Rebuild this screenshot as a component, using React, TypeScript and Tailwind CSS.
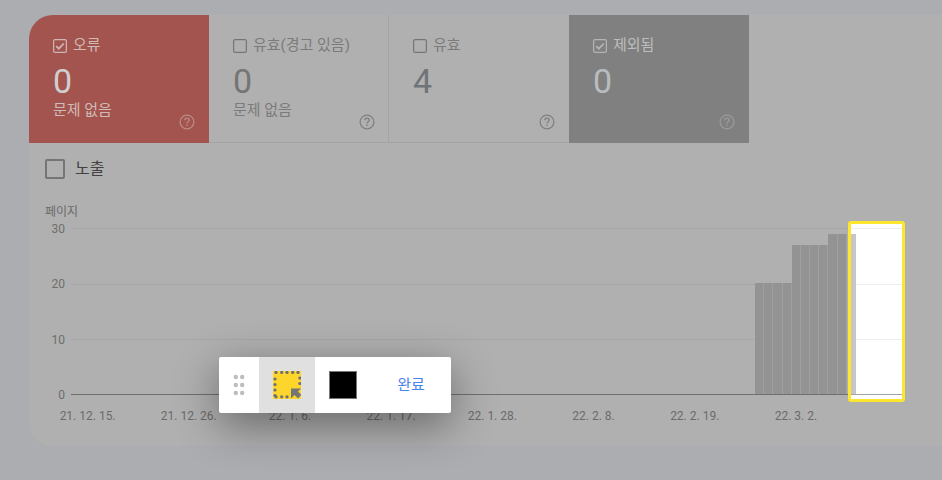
const FONT = "font-['Roboto','Noto_Sans_CJK_KR',sans-serif]";

type Tile = {
  label: string;
  value: string;
  note?: string;
  checked: boolean;
  bg: string;
  labelColor: string;
  boxColor: string;
  valueColor: string;
  helpColor: string;
};

const tiles: Tile[] = [
  { label: '오류', value: '0', note: '문제 없음', checked: true, bg: 'border-transparent bg-[#a3544e]', labelColor: 'text-[#d0bab7]', boxColor: '#cfb6b3', valueColor: 'text-[#cfcfcf]', helpColor: '#bb8a86' },
  { label: '유효(경고 있음)', value: '0', note: '문제 없음', checked: false, bg: 'border-[#a4a4a4]', labelColor: 'text-[#7b7b7b]', boxColor: '#757575', valueColor: 'text-[#757575]', helpColor: '#808080' },
  { label: '유효', value: '4', checked: false, bg: 'border-[#a4a4a4] border-r-transparent', labelColor: 'text-[#7b7b7b]', boxColor: '#757575', valueColor: 'text-[#6f7478]', helpColor: '#808080' },
  { label: '제외됨', value: '0', checked: true, bg: 'border-transparent bg-[#808080]', labelColor: 'text-[#bdbdbd]', boxColor: '#b4b4b4', valueColor: 'text-[#b8bcbf]', helpColor: '#9a9a9a' },
];

const xLabels = ['21. 12. 15.', '21. 12. 26.', '22. 1. 6.', '22. 1. 17.', '22. 1. 28.', '22. 2. 8.', '22. 2. 19.', '22. 3. 2.'];
const yLabels = ['30', '20', '10', '0'];
const bars = [20, 20, 20, 20, 27, 27, 27, 27, 29, 29];

function CheckBox({ checked, color }: { checked: boolean; color: string }) {
  return (
    <svg width="14" height="14" viewBox="0 0 14 14" className="shrink-0">
      <rect x="0.6" y="0.6" width="12.8" height="12.8" rx="1.6" fill="none" stroke={color} strokeWidth="1.2" />
      {checked && <path d="M3.2 7.2l2.6 2.5 5-5.2" fill="none" stroke={color} strokeWidth="1.8" />}
    </svg>
  );
}

function HelpIcon({ color }: { color: string }) {
  return (
    <svg width="16" height="16" viewBox="0 0 16 16" className="absolute bottom-[12px] right-[13px]">
      <circle cx="8" cy="8" r="6.9" fill="none" stroke={color} strokeWidth="1.3" />
      <path d="M5.8 6.3a2.2 2.2 0 0 1 4.4 0c0 1.5-2.2 1.6-2.2 3.2" fill="none" stroke={color} strokeWidth="1.3" />
      <rect x="7.3" y="10.6" width="1.4" height="1.4" fill={color} />
    </svg>
  );
}

function StatusTile({ tile }: { tile: Tile }) {
  return (
    <div className={`relative h-[128px] w-[180px] border-b border-r pl-6 pt-[22px] ${tile.bg}`}>
      <div className={`flex h-[18px] items-center gap-[6px] text-[15px] ${tile.labelColor}`}>
        <CheckBox checked={tile.checked} color={tile.boxColor} />
        <span className="-mt-[2px]">{tile.label}</span>
      </div>
      <div className={`mt-[6px] text-[34px] leading-[40px] ${tile.valueColor}`}>{tile.value}</div>
      {tile.note && <div className={`text-[15px] leading-[18px] ${tile.labelColor}`}>{tile.note}</div>}
      <HelpIcon color={tile.helpColor} />
    </div>
  );
}

function Plot() {
  // origin at x=71, y=220 of the page
  const base = 174;
  const unit = 5.533;
  const barW = 9.18;
  return (
    <svg width="836" height="184" viewBox="0 0 836 184" className="shrink-0">
      {[8, 64, 119].map((y) => (
        <line key={y} x1="0" x2="833" y1={y + 0.5} y2={y + 0.5} stroke="#a6a6a6" />
      ))}
      <line x1="0" x2="833" y1={base + 0.5} y2={base + 0.5} stroke="#6f6f6f" />
      {bars.map((v, i) => {
        const x = Math.round(684 + i * barW);
        const next = Math.round(684 + (i + 1) * barW);
        const top = Math.round(base - v * unit);
        return (
          <g key={i}>
            <rect x={x} y={top} width={next - x} height={base - top} rx="1" fill="#939393" />
            <rect x={next - 1} y={top + 1} width="1" height={base - top - 1} fill="#a0a0a0" />
          </g>
        );
      })}
      <rect x="778" y="2" width="55" height="179" fill="#ffffff" />
      {[8, 64, 119].map((y) => (
        <line key={y} x1="778" x2="833" y1={y + 0.5} y2={y + 0.5} stroke="#eeeeee" />
      ))}
      <line x1="778" x2="833" y1={base + 0.5} y2={base + 0.5} stroke="#a4a4a4" />
      <rect x="778" y={Math.round(base - 29 * unit)} width="7" height={Math.round(29 * unit)} fill="#c6c6c6" />
      <rect x="778.5" y="2.5" width="54" height="178" rx="1.5" fill="none" stroke="#ffe62e" strokeWidth="3" />
    </svg>
  );
}

function ResizeIcon() {
  const dots: [number, number][] = [
    [3, 1.5], [8.7, 1.5], [14, 1.5], [19.7, 1.5], [25, 1.5],
    [2, 8], [2, 13.5], [2, 19], [2, 24.5],
    [3, 25.8], [8.7, 25.8], [14, 25.8],
    [26.8, 7], [26.8, 12.5],
  ];
  return (
    <svg width="28" height="28" viewBox="0 0 28 28">
      <rect width="28" height="28" fill="#fdd52b" />
      {dots.map(([x, y], i) => (
        <circle key={i} cx={x} cy={y} r="1.6" fill="#6f6f6f" />
      ))}
      <path d="M18 17.5h10l-3 3 3.4 3.4-3.4 3.6-3.5-3.5-3.5 3.5z" fill="#757575" />
    </svg>
  );
}

function Toolbar() {
  return (
    <div className="absolute left-[219px] top-[357px] flex h-14 w-[232px] items-stretch rounded-[2px] bg-white shadow-[0_12px_44px_rgba(0,0,0,0.42)]">
      <div className="flex w-10 items-center justify-center">
        <svg width="12" height="22" viewBox="0 0 12 22">
          {[3, 11, 19].map((y) => (
            <g key={y} fill="#bdbdbd">
              <circle cx="2.8" cy={y} r="2.2" />
              <circle cx="9.2" cy={y} r="2.2" />
            </g>
          ))}
        </svg>
      </div>
      <div className="flex w-14 items-center justify-center bg-[#e0e0e0]">
        <ResizeIcon />
      </div>
      <div className="flex w-14 items-center justify-center">
        <div className="h-7 w-7 border border-[#777] bg-black" />
      </div>
      <div className="flex flex-1 items-center justify-center text-[15px] text-[#4a84ee]">완료</div>
    </div>
  );
}

export default function App() {
  return (
    <div className={`relative h-[480px] w-[942px] overflow-hidden bg-[#acadb1] ${FONT}`}>
      <div className="ml-[29px] mt-[15px] inline-block h-[431px] w-[940px] overflow-hidden rounded-[24px] bg-[#b0b0b0]">
        <div className="flex">
          {tiles.map((tile) => (
            <StatusTile key={tile.label} tile={tile} />
          ))}
          <div className="h-[128px] flex-1" />
        </div>
        <div className="flex items-center pl-4 pt-4">
          <div className="h-5 w-5 rounded-[2px] border-2 border-[#757575]" />
          <span className="ml-[10px] text-[16px] leading-5 text-[#424242]">노출</span>
        </div>
        <div className="mt-[25px] pl-4 text-[12px] leading-[16px] text-[#6b6b6b]">페이지</div>
        <div className="flex items-start">
          <div className="mt-px flex h-[182px] w-[36px] flex-col justify-between text-right text-[12px] leading-4 text-[#6e6e6e]">
            {yLabels.map((y) => (
              <div key={y}>{y}</div>
            ))}
          </div>
          <div className="ml-[6px]">
            <Plot />
          </div>
        </div>
        <div className="mt-[4px] flex pl-[8px] text-[12px] leading-4 text-[#6b6b6b]">
          {xLabels.map((x) => (
            <div key={x} className="w-[101.2px] whitespace-nowrap text-center">
              {x}
            </div>
          ))}
        </div>
      </div>
      <Toolbar />
    </div>
  );
}
